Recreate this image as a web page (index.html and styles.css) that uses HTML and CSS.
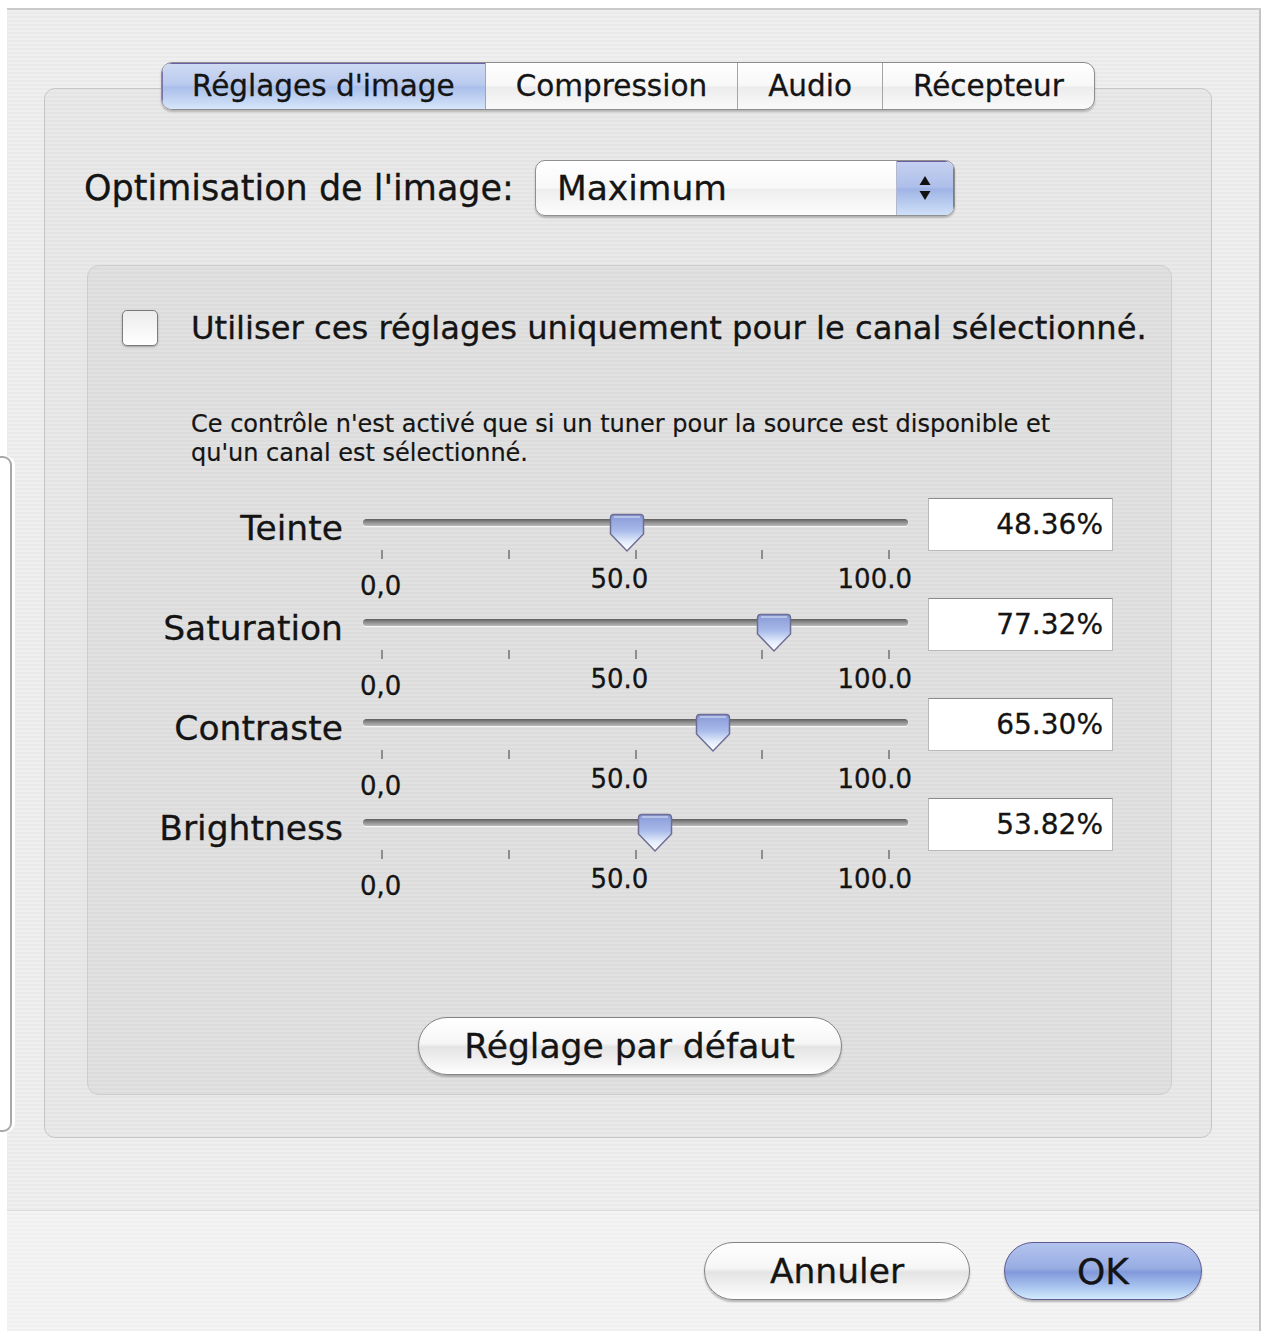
FILE: index.html
```html
<!DOCTYPE html>
<html>
<head>
    <title>Réglages d'image</title>
    <link rel="stylesheet" href="styles.css">
</head>
<body>
    <div class="drawer"></div>
    <div class="window">
        <div class="tabview">
            <div class="tabs">
                <div class="tab selected">Réglages d'image</div>
                <div class="tab">Compression</div>
                <div class="tab">Audio</div>
                <div class="tab">Récepteur</div>
            </div>

            <div class="panel">
                <div class="popup-row">
                    <span class="popup-label">Optimisation de l'image:</span>
                    <div class="popup">
                        <span class="popup-value">Maximum</span>
                        <span class="popup-arrows">
                            <svg width="14" height="26" viewBox="0 0 14 26">
                                <path d="M7 1 L12.5 10 H1.5 Z" fill="#111"/>
                                <path d="M7 25 L12.5 16 H1.5 Z" fill="#111"/>
                            </svg>
                        </span>
                    </div>
                </div>

                <div class="group">
                    <label class="check-row">
                        <span class="checkbox"></span>
                        <span class="check-label">Utiliser ces réglages uniquement pour le canal sélectionné.</span>
                    </label>

                    <p class="note">Ce contrôle n'est activé que si un tuner pour la source est disponible et<br>qu'un canal est sélectionné.</p>

                    <div class="sliders">
                        <div class="slider-row">
                            <span class="slider-label">Teinte</span>
                            <div class="slider">
                                <div class="track"></div>
                                <div class="scale">
                                    <svg class="thumb" style="left: 48.36%" width="36" height="40" viewBox="0 0 36 40"><use href="#thumb"/></svg>
                                    <div class="ticks"><i></i><i></i><i></i><i></i><i></i></div>
                                    <div class="tick-labels"><span class="first">0,0</span><span>50.0</span><span>100.0</span></div>
                                </div>
                            </div>
                            <div class="field">48.36%</div>
                        </div>

                        <div class="slider-row">
                            <span class="slider-label">Saturation</span>
                            <div class="slider">
                                <div class="track"></div>
                                <div class="scale">
                                    <svg class="thumb" style="left: 77.32%" width="36" height="40" viewBox="0 0 36 40"><use href="#thumb"/></svg>
                                    <div class="ticks"><i></i><i></i><i></i><i></i><i></i></div>
                                    <div class="tick-labels"><span class="first">0,0</span><span>50.0</span><span>100.0</span></div>
                                </div>
                            </div>
                            <div class="field">77.32%</div>
                        </div>

                        <div class="slider-row">
                            <span class="slider-label">Contraste</span>
                            <div class="slider">
                                <div class="track"></div>
                                <div class="scale">
                                    <svg class="thumb" style="left: 65.30%" width="36" height="40" viewBox="0 0 36 40"><use href="#thumb"/></svg>
                                    <div class="ticks"><i></i><i></i><i></i><i></i><i></i></div>
                                    <div class="tick-labels"><span class="first">0,0</span><span>50.0</span><span>100.0</span></div>
                                </div>
                            </div>
                            <div class="field">65.30%</div>
                        </div>

                        <div class="slider-row">
                            <span class="slider-label">Brightness</span>
                            <div class="slider">
                                <div class="track"></div>
                                <div class="scale">
                                    <svg class="thumb" style="left: 53.82%" width="36" height="40" viewBox="0 0 36 40"><use href="#thumb"/></svg>
                                    <div class="ticks"><i></i><i></i><i></i><i></i><i></i></div>
                                    <div class="tick-labels"><span class="first">0,0</span><span>50.0</span><span>100.0</span></div>
                                </div>
                            </div>
                            <div class="field">53.82%</div>
                        </div>
                    </div>

                    <div class="group-footer">
                        <button class="btn btn-wide">Réglage par défaut</button>
                    </div>
                </div>
            </div>
        </div>

        <div class="footer">
            <button class="btn btn-cancel">Annuler</button>
            <button class="btn btn-ok">OK</button>
        </div>
    </div>

    <!-- shared slider knob -->
    <svg width="0" height="0" style="position: absolute">
        <defs>
            <linearGradient id="knob" x1="0" y1="0" x2="0" y2="1">
                <stop offset="0" stop-color="#8799d6"/>
                <stop offset="0.45" stop-color="#a9bbea"/>
                <stop offset="0.75" stop-color="#e3edfb"/>
                <stop offset="1" stop-color="#ffffff"/>
            </linearGradient>
            <symbol id="thumb" viewBox="0 0 36 40">
                <path d="M5 1.5 H31 Q34.5 1.5 34.5 5 V21 L18 38 L1.5 21 V5 Q1.5 1.5 5 1.5 Z" fill="url(#knob)" stroke="#6f6d93" stroke-width="1.5"/>
                <path d="M5 4 H31" stroke="#ffffff" stroke-opacity="0.5" stroke-width="1.5"/>
            </symbol>
        </defs>
    </svg>
</body>
</html>
```

FILE: styles.css
```css
body {
    margin: 0;
    background-color: #ffffff;
    font-family: "DejaVu Sans", Verdana, sans-serif;
    color: #141414;
    -webkit-text-stroke: 0.3px #141414;
}
.window {
    margin: 8px 0 0 7px;
    width: 1252px;
    height: 1323px;
    border-top: 2px solid #cacaca;
    border-right: 2px solid #c4c4c4;
    background: repeating-linear-gradient(180deg, #efefef 0, #efefef 2px, #eaeaea 2px, #eaeaea 4px);
    display: flex;
    flex-direction: column;
    overflow: hidden;
}
.drawer {
    position: absolute;
    left: 0;
    top: 456px;
    width: 10px;
    height: 672px;
    background-color: #ffffff;
    border: 2px solid #a8a8a8;
    border-left: none;
    border-radius: 0 9px 9px 0;
    box-shadow: 3px 0 0 #ffffff;
}

/* tab view */
.tabview {
    margin: 52px 47px 72px 37px;
}
.tabs {
    position: relative;
    z-index: 1;
    display: flex;
    width: max-content;
    margin: 0 auto -22px;
    height: 46px;
    border: 1px solid #8d8d8d;
    border-radius: 11px;
    overflow: hidden;
    box-shadow: 0 2px 2px rgba(0, 0, 0, 0.22);
    background: linear-gradient(#ffffff, #f7f7f7 50%, #ececec 52%, #fafafa);
}
.tab {
    padding: 0 30px;
    font-size: 29.5px;
    line-height: 46px;
    white-space: nowrap;
}
.tab + .tab {
    border-left: 1px solid #a5a5a5;
}
.tab.selected {
    background: linear-gradient(#d0dbf3, #b9caee 48%, #a9bfea 52%, #d6e5fa);
    box-shadow: inset 0 1px 0 #6c5fa6, inset 1px 0 0 #7d74ab;
}
.panel {
    border: 1px solid #c6c6c6;
    border-radius: 11px;
    background-color: rgba(0, 0, 0, 0.022);
    padding: 71px 39px 42px 42px;
}

/* popup */
.popup-row {
    display: flex;
    align-items: center;
    gap: 21px;
    margin-left: -3px;
}
.popup-label {
    font-size: 35px;
    white-space: nowrap;
}
.popup {
    display: flex;
    width: 418px;
    height: 54px;
    border: 1px solid #8f8f8f;
    border-radius: 10px;
    overflow: hidden;
    box-shadow: 0 2px 2px rgba(0, 0, 0, 0.22);
    background: linear-gradient(#ffffff, #f8f8f8 50%, #eeeeee 52%, #fcfcfc);
}
.popup-value {
    flex: 1;
    padding-left: 21px;
    font-size: 34.5px;
    line-height: 54px;
}
.popup-arrows {
    width: 57px;
    display: flex;
    align-items: center;
    justify-content: center;
    border-left: 1px solid #b3b8cf;
    background: linear-gradient(#c6d1f0, #aebfea 48%, #9fb4e5 52%, #cfe0f8);
    box-shadow: inset 0 1px 0 #6c5fa6, inset -1px 0 0 #7d74ab;
}

/* group box */
.group {
    margin-top: 49px;
    border: 1px solid #cdcdcd;
    border-radius: 12px;
    background-color: rgba(0, 0, 0, 0.03);
    padding: 43px 34px 19px 34px;
}
.check-row {
    display: flex;
    align-items: center;
    gap: 33px;
}
.checkbox {
    flex-shrink: 0;
    width: 34px;
    height: 34px;
    border: 1px solid #7c7c7c;
    border-radius: 5px;
    background: linear-gradient(#ececec, #ffffff);
    box-shadow: 0 1px 2px rgba(0, 0, 0, 0.3);
}
.check-label {
    font-size: 32.2px;
    white-space: nowrap;
}
.note {
    margin: 63px 0 0 69px;
    font-size: 24px;
    line-height: 29px;
    -webkit-text-stroke: 0.2px #141414;
}

/* sliders */
.sliders {
    margin-top: 30px;
}
.slider-row {
    display: grid;
    grid-template-columns: 221px 545px 185px;
    column-gap: 20px;
    height: 100px;
}
.slider-label {
    padding-top: 10px;
    font-size: 34.5px;
    line-height: 40px;
    text-align: right;
}
.slider {
    padding-top: 21px;
}
.track {
    height: 7px;
    border-radius: 4px;
    background: linear-gradient(#5e5e5e, #8c8c8c 45%, #b9b9b9);
    box-shadow: 0 1px 1px rgba(255, 255, 255, 0.8);
}
.scale {
    position: relative;
    margin: 0 19px;
    padding-top: 24px;
}
.thumb {
    position: absolute;
    top: -13px;
    transform: translateX(-50%);
}
.ticks {
    display: flex;
    justify-content: space-between;
    margin: 0 -1px;
}
.ticks i {
    width: 2px;
    height: 9px;
    background-color: #8d8d8d;
}
.tick-labels {
    display: flex;
    justify-content: space-between;
    align-items: flex-start;
    margin: 5px -23px 0 -22px;
    font-size: 26px;
    line-height: 30px;
}
.tick-labels .first {
    margin-top: 7px;
}
.field {
    height: 51px;
    border: 1px solid #b8b8b8;
    border-top-color: #8a8a8a;
    background-color: #ffffff;
    padding-right: 9px;
    font-size: 28px;
    line-height: 51px;
    text-align: right;
}

/* buttons */
.group-footer {
    display: flex;
    justify-content: center;
    margin-top: 119px;
}
.btn {
    height: 58px;
    padding: 0;
    border: 1px solid #848484;
    border-radius: 29px;
    font-family: "DejaVu Sans", Verdana, sans-serif;
    font-size: 34.5px;
    color: #141414;
    -webkit-text-stroke: 0.3px #141414;
    background: linear-gradient(#ffffff, #f6f6f6 45%, #e4e4e4 52%, #f3f3f3 80%, #ffffff);
    box-shadow: 0 2px 2px rgba(0, 0, 0, 0.25);
}
.btn-wide {
    width: 424px;
}
.btn-cancel {
    width: 266px;
}
.btn-ok {
    width: 198px;
    font-size: 36px;
    border-color: #5f5a8f;
    background: linear-gradient(#b4c3ee, #98ade3 45%, #8199da 52%, #a9c3ef 78%, #d2ebfb);
}
.footer {
    flex: 1;
    display: flex;
    justify-content: flex-end;
    align-items: flex-start;
    gap: 34px;
    padding: 31px 57px 0 0;
    border-top: 1px solid #dcdcdc;
    background: repeating-linear-gradient(180deg, #f5f4f4 0, #f5f4f4 2px, #f1f0f0 2px, #f1f0f0 4px);
}
```
